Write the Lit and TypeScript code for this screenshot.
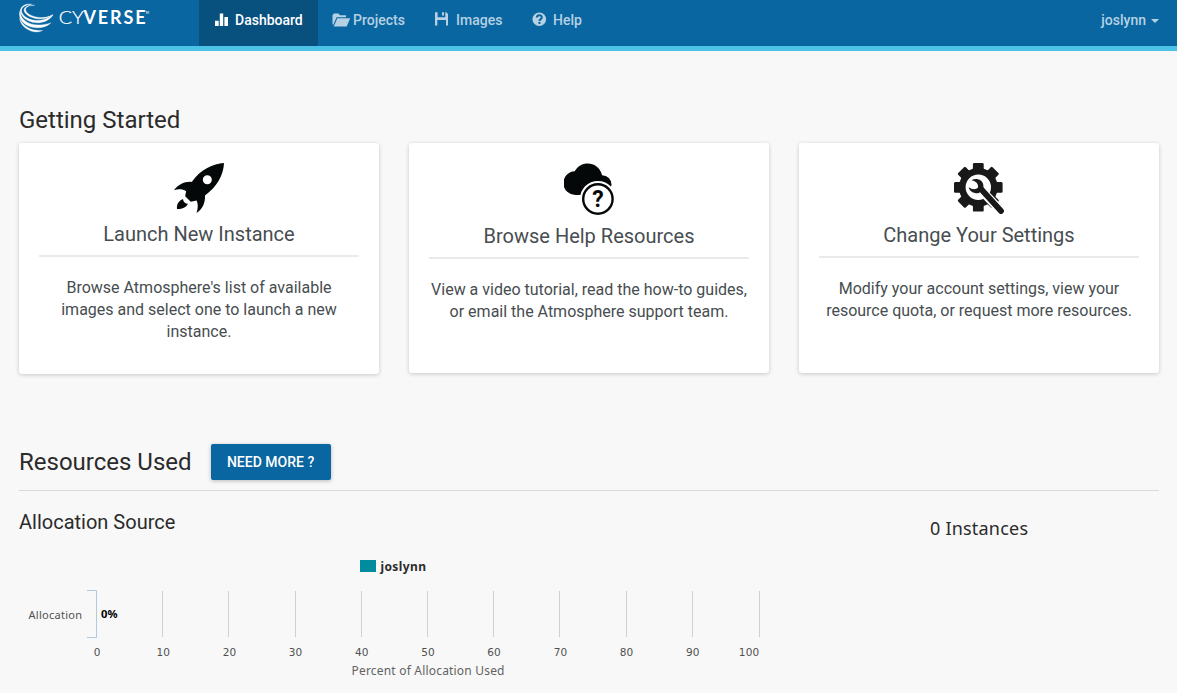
import { LitElement, html, svg, css } from "lit";
import { customElement } from "lit/decorators.js";

const logo = html`<svg class="logo" width="134" height="34" viewBox="0 0 134 34">
  <g fill="#fff" stroke="#fff" stroke-width=".35">
    <path d="M15.500 5.300C8 5.200 5 8.500 7.500 12C11.500 17 25 20.300 34 14.600C26 21.800 10 19 5.800 12.500C3.300 8 8 4.300 15.500 5.300Z"/>
    <path d="M12.500 4.200C4.500 4.800 1.300 8.500 3 12.800C6 19.500 20 25 34 15C26 27 6.500 24 2 13.500C-.2 8 4.500 3.200 12.500 4.200Z"/>
    <path d="M1.800 9.500C-1 18.500 11 29.500 31.800 22.900C23 31.500 4 28 .9 17.500C0 14 .5 11.500 1.800 9.500Z"/>
    <path d="M.7 18.500C4 26.500 12 31.200 23.500 30.500C20 32.500 14.500 32.300 10.500 30.300C5 27.800 1.500 24 .7 18.500Z"/>
  </g>
  <text class="brand light" x="39.800" y="24" textLength="25" lengthAdjust="spacingAndGlyphs">CY</text>
  <text class="brand bold" x="64.500" y="24" textLength="62">VERSE</text>
  <text class="tm" x="126.500" y="13.500" textLength="3.500">TM</text>
</svg>`;

const navIcons = {
  bars: html`<svg width="20" height="16" viewBox="0 0 20 16" fill="currentColor"><path d="M1 9.800h3.700V15H1zM5.800 2.600h3.400V15H5.800zM10.400 6H14v9h-3.600z"/></svg>`,
  folder: html`<svg width="20" height="16" viewBox="0 0 20 16" fill="currentColor"><path d="M.5 13V4.200L1.900 2.600H6.600L7.900 4.200H14V6.300H4.600L1.200 14Z"/><path d="M5.300 7.200H18.200L14.700 15.400H1.700Z"/></svg>`,
  floppy: html`<svg width="20" height="16" viewBox="0 0 20 16" fill="currentColor"><path fill-rule="evenodd" d="M0 1.200H2.600V6.200H10.300V1.200H11.300L13 2.900V14.600H11V9H2.300V14.600H0ZM7 1.200H9V4.600H7Z"/></svg>`,
  help: html`<svg width="20" height="16" viewBox="0 0 20 16"><circle cx="7.300" cy="8.300" r="6.800" fill="currentColor"/><path d="M4.900 6.500C5 3.500 9.900 3.500 9.800 6.300C9.800 8.200 7.500 8.100 7.500 9.900" fill="none" stroke="#0a66a1" stroke-width="2"/><path d="M6.400 10.900h2.100v2H6.400z" fill="#0a66a1"/></svg>`,
};

const teeth = [0, 45, 90, 135, 180, 225, 270, 315];

const rocket = html`<svg class="art" width="50" height="50" viewBox="0 0 50 50" fill="#050808">
  <path fill-rule="evenodd" d="M50 0C39 .8 27 6 17.700 18.900C10 18.400 4.500 21.500 0 27.200C4.500 25.900 8.500 26 12.200 28.200C11.600 30 11.500 31.500 11.200 33.200L16.700 38.700L22.600 37.400C24.300 41 24 45.500 22.500 50C28.500 46 31.300 40 31 32.400C43 24 49.500 12 50 0ZM33.300 12.300A4.500 4.500 0 1 1 33.300 21.300A4.500 4.500 0 1 1 33.300 12.300Z"/>
  <path d="M9 36C4.800 37.800 2.500 41 3 46C8 46.200 12 44.800 14 40.800C12.800 40.500 11.500 40.200 10.600 39.400C9.600 38.500 9.200 37.400 9 36Z"/>
</svg>`;

const cloud = html`<svg class="art" width="50" height="52" viewBox="0 0 50 52" fill="#050808">
  <path d="M11.800 32A11.900 11.900 0 0 1 10.800 8.200C16.500-3 34.500-2.500 38.100 12.200A9.500 9.500 0 0 1 47.500 22L44 32Z"/>
  <circle cx="33.900" cy="36" r="18" fill="#fff"/>
  <circle cx="33.900" cy="36" r="14.700" fill="#fff" stroke="#050808" stroke-width="2.400"/>
  <text class="question" x="33.900" y="44.200" text-anchor="middle">?</text>
</svg>`;

const gear = html`<svg class="art" width="50" height="51" viewBox="0 0 50 51" fill="#191919">
  ${teeth.map((a) => svg`<path transform=${`rotate(${a} 24.300 24.300)`} d="M17.300 8L18.900 5.500V1.200Q19 0 20.200 0H28.400Q29.600 0 29.700 1.200V5.500L31.300 8Z"/>`)}
  <circle cx="24.300" cy="24.300" r="16" fill="none" stroke="#191919" stroke-width="6.600"/>
  <path d="M27 27L47.300 48.300" stroke="#fff" stroke-width="9"/>
  <path d="M27 26L47 48" stroke="#191919" stroke-width="5.800" stroke-linecap="round"/>
  <path d="M17.500 17.200C22 14.500 28.500 16.500 29.300 21.700L29.500 25.500L25 30C20.500 30.800 16 29 14.600 24.200C18 26.500 21.800 27 24 24.500C24.500 21.500 23 18.500 17.500 17.200Z"/>
</svg>`;

const cards = [
  { art: rocket, title: "Launch New Instance", lines: ["Browse Atmosphere's list of available", "images and select one to launch a new", "instance."] },
  { art: cloud, title: "Browse Help Resources", lines: ["View a video tutorial, read the how-to guides,", "or email the Atmosphere support team."] },
  { art: gear, title: "Change Your Settings", lines: ["Modify your account settings, view your", "resource quota, or request more resources."] },
];

@customElement("app-root")
export class AppRoot extends LitElement {
  static styles = css`
    :host { display: block; height: 693px; overflow: hidden; background: #f8f8f8; font-family: Roboto, sans-serif; color: #2b2b2b; }
    * { box-sizing: border-box; }
    svg { display: block; flex: none; }
    nav { display: flex; height: 51px; background: #0a66a1; border-bottom: 5px solid #4dc1e6; padding: 0 18px 0 19px; font-size: 14px; font-weight: 500; color: #b5d1e3; }
    .logo { margin-right: 46px; }
    .brand { font-family: Lato, sans-serif; font-size: 18px; fill: #fff; }
    .light { font-weight: 300; stroke: #fff; stroke-width: .2px; }
    .bold { font-weight: 700; }
    .tm { font: 3px Lato, sans-serif; fill: #fff; }
    .item { display: flex; align-items: flex-start; padding: 11px 15px 0; height: 46px; line-height: 18px; white-space: nowrap; }
    .active { background: #08517f; color: #fff; width: 119px; }
    .projects { width: 117px; padding-left: 14px; }
    .images { width: 97px; padding-left: 0; }
    .help { padding-left: 0; }
    .item svg { margin-right: 1px; }
    .user { display: flex; margin-left: auto; padding-top: 11px; line-height: 18px; gap: 5px; }
    .caret { margin-top: 8px; }
    main { padding: 55px 18px 0 19px; }
    h1, h2, h3, p { margin: 0; font-weight: 400; }
    h1 { font-size: 24px; line-height: 28px; white-space: nowrap; }
    .cards { display: grid; grid-template-columns: repeat(3, 360px); gap: 30px; align-items: start; margin-top: 9px; height: 231px; }
    .card { background: #fff; border-radius: 3px; min-height: 230px; padding: 20px 20px 31px; display: flex; flex-direction: column; align-items: center; box-shadow: 0 1px 4px rgba(0, 0, 0, .2); color: #474d50; text-align: center; white-space: nowrap; }
    .card h3 { font-size: 20px; line-height: 22px; margin-top: 10px; padding-bottom: 10px; border-bottom: 2px solid #eaeaea; align-self: stretch; }
    .card p { margin-top: 20px; font-size: 16px; line-height: 22px; }
    .question { font: 700 23px Roboto, sans-serif; }
    .resources { display: flex; align-items: center; gap: 19px; margin-top: 70px; height: 47px; border-bottom: 1px solid #d9d9d9; padding-bottom: 10px; }
    button { font: 500 14px/36px Roboto, sans-serif; color: #fff; background: #0a66a1; border: 0; border-radius: 2px; width: 120px; height: 36px; padding: 0; box-shadow: 0 1px 4px rgba(0, 0, 0, .26); white-space: nowrap; }
    .panels { display: grid; grid-template-columns: 760px 1fr; padding-top: 19px; }
    h2 { font-size: 20px; line-height: 24px; }
    .chart { margin-top: 16px; font-family: "Noto Sans", sans-serif; font-size: 11px; fill: #505050; }
    .tick { font-family: "DejaVu Sans", sans-serif; font-size: 10.500px; }
    .legend { font-size: 12px; font-weight: 700; fill: #2b2b2b; }
    .value { font-weight: 700; fill: #000; }
    .axis { font-size: 12px; fill: #636363; }
    .count { padding: 5px 0 0 151px; }
    .count text { font-family: "Noto Sans", sans-serif; font-size: 18px; fill: #2b2b2b; }
  `;

  render() {
    const grid = [162.5, 228.5, 295.5, 361.5, 427.5, 493.5, 559.5, 626.5, 692.5, 759.5];
    const labels = [97, 163.3, 229.5, 295.5, 361.7, 428, 494, 560.5, 626.5, 692.7, 749];
    return html`
      <nav>
        ${logo}
        <div class="item active">${navIcons.bars}<span>Dashboard</span></div>
        <div class="item projects">${navIcons.folder}<span>Projects</span></div>
        <div class="item images">${navIcons.floppy}<span>Images</span></div>
        <div class="item help">${navIcons.help}<span>Help</span></div>
        <div class="user"><span>joslynn</span><svg class="caret" width="8" height="4" viewBox="0 0 8 4"><path d="M0 0H8L4 4Z" fill="currentColor"/></svg></div>
      </nav>
      <main>
        <h1>Getting Started</h1>
        <section class="cards">
          ${cards.map((c) => html`<article class="card">${c.art}<h3>${c.title}</h3><p>${c.lines.map((l, i) => html`${i ? html`<br>` : ""}${l}`)}</p></article>`)}
        </section>
        <section class="resources"><h1>Resources Used</h1><button>NEED MORE ?</button></section>
        <section class="panels">
          <div>
            <h2>Allocation Source</h2>
            <svg class="chart" width="760" height="143" viewBox="19 550 760 143">
              <rect x="360" y="560" width="16" height="12" fill="#008c9e"/>
              <text class="legend" x="380.500" y="571" textLength="45.500">joslynn</text>
              ${grid.map((x) => svg`<path d=${`M${x} 591V637`} stroke="#d0d0d0"/>`)}
              <path d="M87 590.500H96.500V637.500H87" fill="none" stroke="#b4c8de"/>
              <text x="28.500" y="619" textLength="53.500">Allocation</text>
              <text class="value" x="101" y="618" textLength="16.500" lengthAdjust="spacingAndGlyphs">0%</text>
              ${labels.map((x, i) => svg`<text class="tick" x=${x} y="656" text-anchor="middle" textLength=${i === 0 ? 7 : i === 10 ? 20.5 : 13.5}>${i * 10}</text>`)}
              <text class="axis" x="351.500" y="675" textLength="153">Percent of Allocation Used</text>
            </svg>
          </div>
          <div class="count"><svg width="110" height="28" viewBox="0 0 110 28"><text x="0" y="20" textLength="98">0 Instances</text></svg></div>
        </section>
      </main>
    `;
  }
}
